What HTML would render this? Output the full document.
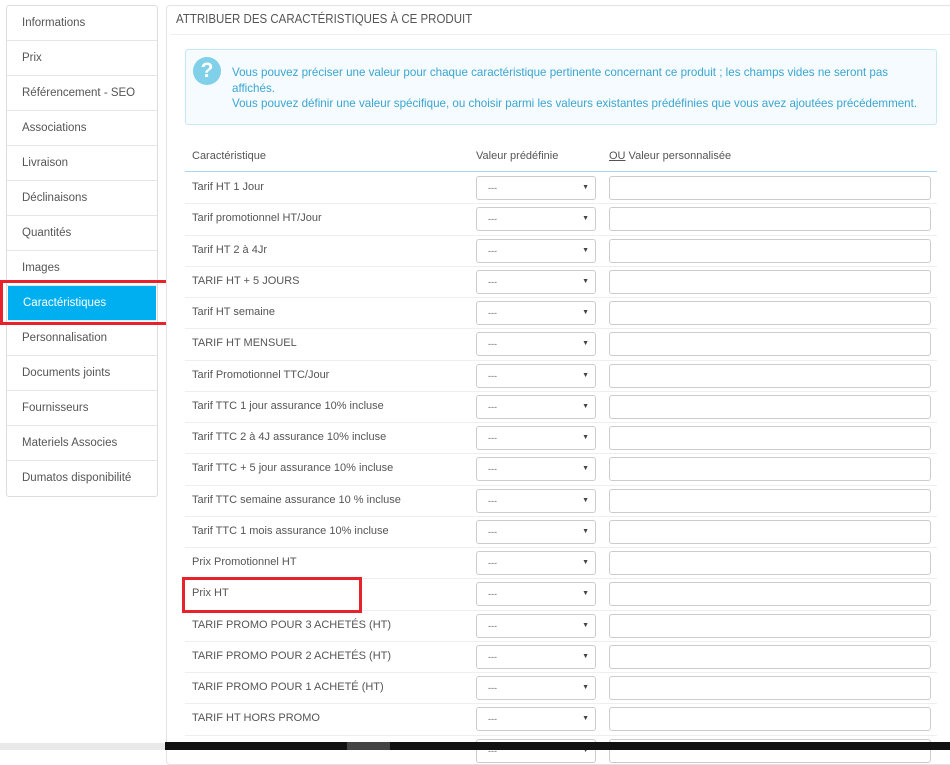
<!DOCTYPE html>
<html><head><meta charset="utf-8">
<style>
*{box-sizing:border-box;margin:0;padding:0}
body{width:950px;height:750px;background:#fff;font-family:"Liberation Sans",sans-serif;position:relative;overflow:hidden;color:#555}
.side{position:absolute;left:6px;top:5px;width:152px;background:#fff;border:1px solid #ddd;border-radius:3px}
.side div{height:35px;line-height:34px;padding-left:15px;font-size:11.5px;color:#555;border-bottom:1px solid #e6e6e6}
.side div.act{background:#00aff0;color:#fff;margin-left:1px;margin-right:1px}
.redbox{position:absolute;border:3px solid #e8222b}
.panel{position:absolute;left:166px;top:5px;width:800px;height:760px;background:#fff;border:1px solid #e3e3e3;border-radius:4px}
.ptitle{position:absolute;left:176px;top:12px;font-family:"Liberation Sans Narrow","Liberation Sans",sans-serif;font-size:12.5px;color:#555;transform:scaleX(.92);transform-origin:left}
.hline{position:absolute;left:171px;top:34px;width:779px;height:1px;background:#eee}
.info{position:absolute;left:185px;top:49px;width:752px;height:76px;background:#f5fbfe;border:1px solid #c5e8f6;border-radius:3px}
.qi{position:absolute;left:193px;top:57px;width:28px;height:28px;border-radius:50%;background:#7fd0e8;color:#fff;font-weight:bold;font-size:21px;text-align:center;line-height:28px}
.itxt{position:absolute;left:232px;top:65px;width:690px;font-size:11.6px;line-height:15.5px;color:#3aa5d1}
.th{position:absolute;top:150px;font-size:11px;color:#555}
.thl{position:absolute;left:185px;top:171px;width:752px;height:1px;background:#a8d4ec}
.row{position:absolute;left:185px;width:752px;height:1px;background:#eee}
.lab{position:absolute;left:192px;font-size:11px;color:#555}
.sel{position:absolute;left:476px;width:120px;height:24px;border:1px solid #ccc;border-radius:3px;background:#fff}
.sel:before{content:"---";position:absolute;left:11px;top:6px;font-size:9px;color:#666}
.sel:after{content:"▼";position:absolute;right:6px;top:7px;font-size:7px;color:#444}
.inp{position:absolute;left:609px;width:322px;height:24px;border:1px solid #ccc;border-radius:3px;background:#fff}
.bar{position:absolute;left:165px;top:742px;width:785px;height:8px;background:#111}
.bar2{position:absolute;left:347px;top:742px;width:43px;height:8px;background:#444}
.lbot{position:absolute;left:0;top:743px;width:165px;height:7px;background:#e9e9e9}
</style></head><body>
<div class="side">
<div>Informations</div><div>Prix</div><div>Référencement - SEO</div><div>Associations</div><div>Livraison</div><div>Déclinaisons</div><div>Quantités</div><div>Images</div><div class="act">Caractéristiques</div><div>Personnalisation</div><div>Documents joints</div><div>Fournisseurs</div><div>Materiels Associes</div><div style="border-bottom:none">Dumatos disponibilité</div>
</div>
<div class="redbox" style="left:0;top:280px;width:182px;height:45px"></div>
<div class="panel"></div>
<div class="ptitle">ATTRIBUER DES CARACTÉRISTIQUES À CE PRODUIT</div>
<div class="hline"></div>
<div class="info"></div>
<div class="qi">?</div>
<div class="itxt">Vous pouvez préciser une valeur pour chaque caractéristique pertinente concernant ce produit ; les champs vides ne seront pas affichés.<br>Vous pouvez définir une valeur spécifique, ou choisir parmi les valeurs existantes prédéfinies que vous avez ajoutées précédemment.</div>
<div class="th" style="left:192px">Caractéristique</div>
<div class="th" style="left:476px">Valeur prédéfinie</div>
<div class="th" style="left:609px"><u>OU</u> Valeur personnalisée</div>
<div class="thl"></div>
<div id="rows"></div>
<script>
var L=["Tarif HT 1 Jour","Tarif promotionnel HT/Jour","Tarif HT 2 à 4Jr","TARIF HT + 5 JOURS","Tarif HT semaine","TARIF HT MENSUEL","Tarif Promotionnel TTC/Jour","Tarif TTC 1 jour assurance 10% incluse","Tarif TTC 2 à 4J assurance 10% incluse","Tarif TTC + 5 jour assurance 10% incluse","Tarif TTC semaine assurance 10 % incluse","Tarif TTC 1 mois assurance 10% incluse","Prix Promotionnel HT","Prix HT","TARIF PROMO POUR 3 ACHETÉS (HT)","TARIF PROMO POUR 2 ACHETÉS (HT)","TARIF PROMO POUR 1 ACHETÉ (HT)","TARIF HT HORS PROMO",""];
var h="";
for(var i=0;i<L.length;i++){var t=172+i*31.25;
h+='<div class="lab" style="top:'+(t+9)+'px">'+L[i]+'</div><div class="sel" style="top:'+(t+4)+'px"></div><div class="inp" style="top:'+(t+4)+'px"></div>';
if(i>0)h+='<div class="row" style="top:'+t+'px"></div>';}
document.getElementById("rows").innerHTML=h;
</script>
<div class="redbox" style="left:182px;top:577px;width:180px;height:36px"></div>
<div class="lbot"></div>
<div class="bar"></div><div class="bar2"></div>
</body></html>
